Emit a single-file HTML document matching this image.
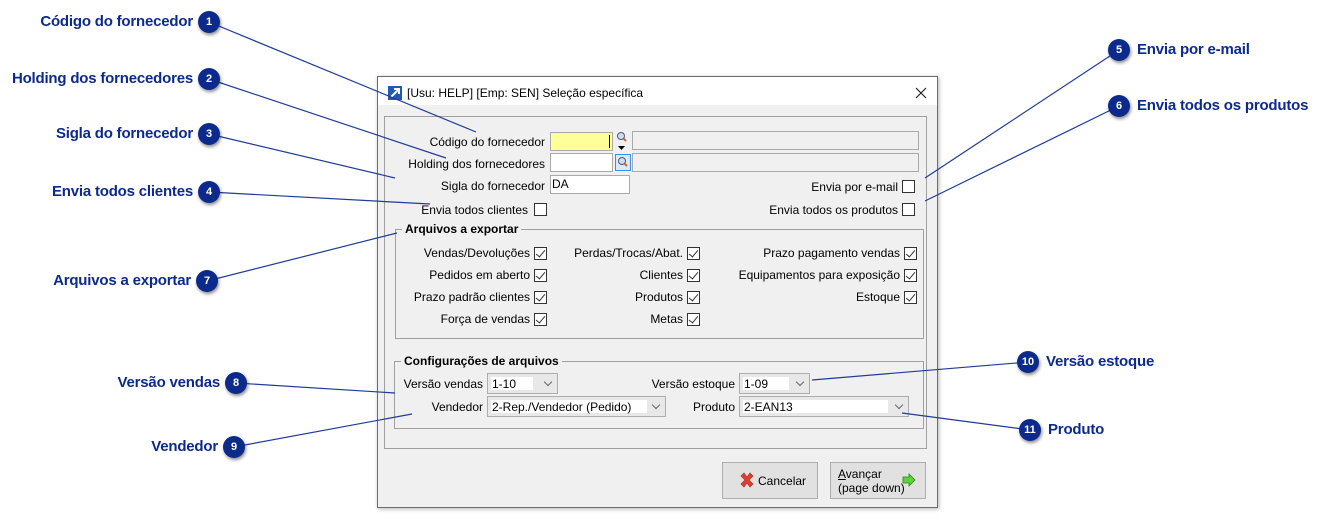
<!DOCTYPE html>
<html><head><meta charset="utf-8"><style>
*{margin:0;padding:0;box-sizing:border-box}
body{width:1322px;height:522px;background:#fff;position:relative;overflow:hidden;font-family:"Liberation Sans",sans-serif;font-size:12px;color:#000}
.a{position:absolute}
.c{position:absolute;color:#0c2a8c;font-weight:bold;font-size:15px;white-space:nowrap;line-height:18px;letter-spacing:-0.2px}
.b{position:absolute;width:22px;height:22px;border-radius:50%;background:#0c2a8c;color:#fff;font-weight:bold;font-size:11px;text-align:center;line-height:22px;box-shadow:1px 2px 3px rgba(0,0,0,.45);z-index:3}
.l{position:absolute;white-space:nowrap;line-height:14px;font-size:12px}
.cb{position:absolute;width:13px;height:13px;border:1px solid #333;background:#fff}
.ck{position:absolute;width:13px;height:13px;border:1px solid #333;background:#fff}
.ck:after{content:"";position:absolute;left:3px;top:0px;width:4px;height:8px;border:solid #333;border-width:0 1px 1px 0;transform:rotate(40deg)}
.in{position:absolute;background:#fff;border:1px solid #a9a9a9}
.cmb{position:absolute;background:#e8e8e8;border:1px solid #adadad}
.cmb .t{position:absolute;left:3px;top:3px;bottom:3px;background:#fff;padding-left:1px;line-height:15px}
.cmb .v{position:absolute;right:6px;top:5px;width:6px;height:6px;border:solid #666;border-width:0 1px 1px 0;transform:rotate(45deg)}
.grp{position:absolute;border:1px solid #a0a0a0}
.lg{position:absolute;background:#f0f0f0;font-weight:bold;padding:0 3px;line-height:14px}
.btn{position:absolute;background:#e1e1e1;border:1px solid #adadad}
</style></head><body>

<div class="c" style="right:1129px;top:13px">Código do fornecedor</div><div class="b" style="left:198px;top:11px">1</div>
<div class="c" style="right:1129px;top:70px">Holding dos fornecedores</div><div class="b" style="left:198px;top:68px">2</div>
<div class="c" style="right:1129px;top:125px">Sigla do fornecedor</div><div class="b" style="left:198px;top:123px">3</div>
<div class="c" style="right:1129px;top:183px">Envia todos clientes</div><div class="b" style="left:198px;top:181px">4</div>
<div class="c" style="right:1131px;top:272px">Arquivos a exportar</div><div class="b" style="left:196px;top:270px">7</div>
<div class="c" style="right:1102px;top:374px">Versão vendas</div><div class="b" style="left:225px;top:372px">8</div>
<div class="c" style="right:1104px;top:438px">Vendedor</div><div class="b" style="left:223px;top:436px">9</div>
<div class="b" style="left:1108px;top:39px">5</div><div class="c" style="left:1137px;top:41px">Envia por e-mail</div>
<div class="b" style="left:1108px;top:95px">6</div><div class="c" style="left:1137px;top:97px">Envia todos os produtos</div>
<div class="b" style="left:1017px;top:351px">10</div><div class="c" style="left:1046px;top:353px">Versão estoque</div>
<div class="b" style="left:1019px;top:419px">11</div><div class="c" style="left:1048px;top:421px">Produto</div>

<!-- dialog -->
<div class="a" style="left:377px;top:76px;width:561px;height:432px;background:#f0f0f0;border:1px solid #6d6d6d;box-shadow:1px 1px 4px rgba(0,0,0,.3)"></div>
<div class="a" style="left:378px;top:77px;width:559px;height:28px;background:#fff"></div>
<div class="a" style="left:388px;top:86px;width:14px;height:14px;background:#1f5bb5"><svg width="14" height="14"><path d="M3 11 L11 3 M6 3 H11 V8" stroke="#fff" stroke-width="2" fill="none"/></svg></div>
<div class="l" style="left:407px;top:86px">[Usu: HELP] [Emp: SEN] Seleção específica</div>
<svg class="a" style="left:915px;top:87px" width="12" height="12"><path d="M1 1L11 11M11 1L1 11" stroke="#222" stroke-width="1.2"/></svg>
<div class="a" style="left:384px;top:116px;width:543px;height:333px;border:1px solid #a0a0a0"></div>

<div class="l" style="right:777px;top:135px">Código do fornecedor</div>
<div class="in" style="left:550px;top:132px;width:63px;height:19px;background:#ffff99"></div>
<div class="a" style="left:609px;top:135px;width:1px;height:13px;background:#000"></div>
<svg class="a" style="left:616px;top:131px" width="12" height="22"><circle cx="5" cy="5" r="3.5" fill="#cde" stroke="#557"/><line x1="7.5" y1="7.5" x2="10" y2="10" stroke="#c63" stroke-width="2"/><path d="M2 15h7l-3.5 4z" fill="#000"/></svg>
<div class="in" style="left:632px;top:131px;width:287px;height:19px;background:#f0f0f0"></div>
<div class="l" style="right:777px;top:157px">Holding dos fornecedores</div>
<div class="in" style="left:550px;top:153px;width:63px;height:19px"></div>
<div class="a" style="left:615px;top:154px;width:16px;height:17px;border:1px solid #3a8ee6;background:#dbe9f8"></div>
<svg class="a" style="left:617px;top:156px" width="12" height="12"><circle cx="5" cy="5" r="3.5" fill="#cde" stroke="#557"/><line x1="7.5" y1="7.5" x2="10" y2="10" stroke="#c63" stroke-width="2"/></svg>
<div class="in" style="left:632px;top:153px;width:287px;height:19px;background:#f0f0f0"></div>
<div class="l" style="right:777px;top:179px">Sigla do fornecedor</div>
<div class="in" style="left:550px;top:175px;width:80px;height:19px;padding-left:1px;line-height:17px">DA</div>
<div class="l" style="right:424px;top:180px">Envia por e-mail</div><div class="cb" style="left:902px;top:180px"></div>
<div class="l" style="right:794px;top:203px">Envia todos clientes</div><div class="cb" style="left:534px;top:203px"></div>
<div class="l" style="right:424px;top:203px">Envia todos os produtos</div><div class="cb" style="left:902px;top:203px"></div>

<div class="grp" style="left:395px;top:229px;width:529px;height:110px"></div>
<div class="lg" style="left:402px;top:222px">Arquivos a exportar</div>
<div class="l" style="right:792px;top:246px">Vendas/Devoluções</div><div class="ck" style="left:534px;top:247px"></div>
<div class="l" style="right:792px;top:268px">Pedidos em aberto</div><div class="ck" style="left:534px;top:269px"></div>
<div class="l" style="right:792px;top:290px">Prazo padrão clientes</div><div class="ck" style="left:534px;top:291px"></div>
<div class="l" style="right:792px;top:312px">Força de vendas</div><div class="ck" style="left:534px;top:313px"></div>
<div class="l" style="right:639px;top:246px">Perdas/Trocas/Abat.</div><div class="ck" style="left:687px;top:247px"></div>
<div class="l" style="right:639px;top:268px">Clientes</div><div class="ck" style="left:687px;top:269px"></div>
<div class="l" style="right:639px;top:290px">Produtos</div><div class="ck" style="left:687px;top:291px"></div>
<div class="l" style="right:639px;top:312px">Metas</div><div class="ck" style="left:687px;top:313px"></div>
<div class="l" style="right:422px;top:246px">Prazo pagamento vendas</div><div class="ck" style="left:904px;top:247px"></div>
<div class="l" style="right:422px;top:268px">Equipamentos para exposição</div><div class="ck" style="left:904px;top:269px"></div>
<div class="l" style="right:422px;top:290px">Estoque</div><div class="ck" style="left:904px;top:291px"></div>

<div class="grp" style="left:394px;top:361px;width:530px;height:68px"></div>
<div class="lg" style="left:401px;top:354px">Configurações de arquivos</div>
<div class="l" style="right:839px;top:377px">Versão vendas</div>
<div class="cmb" style="left:487px;top:373px;width:71px;height:21px"><div class="t" style="right:24px">1-10</div><div class="v"></div></div>
<div class="l" style="right:839px;top:400px">Vendedor</div>
<div class="cmb" style="left:487px;top:396px;width:179px;height:21px"><div class="t" style="right:18px">2-Rep./Vendedor (Pedido)</div><div class="v"></div></div>
<div class="l" style="right:587px;top:377px">Versão estoque</div>
<div class="cmb" style="left:739px;top:373px;width:71px;height:21px"><div class="t" style="right:20px">1-09</div><div class="v"></div></div>
<div class="l" style="right:587px;top:400px">Produto</div>
<div class="cmb" style="left:739px;top:396px;width:170px;height:21px"><div class="t" style="right:20px">2-EAN13</div><div class="v"></div></div>

<div class="btn" style="left:722px;top:462px;width:96px;height:37px"></div>
<svg class="a" style="left:739px;top:472px" width="16" height="16"><path d="M2 4L5 1L8 5L11 1L14 4L10 8L14 12L11 15L8 11L5 15L2 12L6 8Z" fill="#e0412c" stroke="#a22" stroke-width=".6"/></svg>
<div class="l" style="left:758px;top:474px">Cancelar</div>
<div class="btn" style="left:830px;top:462px;width:96px;height:37px"></div>
<div class="l" style="left:838px;top:467px;line-height:14px"><u>A</u>vançar<br>(page down)</div>
<svg class="a" style="left:902px;top:473px" width="14" height="14"><path d="M1 4H7V1L13 7L7 13V10H1Z" fill="#5bd23a" stroke="#2a8a1a" stroke-width=".8"/></svg>

<svg class="a" style="left:0;top:0;z-index:2" width="1322" height="522">
<g stroke="#1f3c96" stroke-width="1.2" fill="none">
<line x1="209" y1="22" x2="476" y2="132"/>
<line x1="209" y1="79" x2="446" y2="158"/>
<line x1="209" y1="134" x2="395" y2="178"/>
<line x1="209" y1="192" x2="430" y2="204"/>
<line x1="1119" y1="50" x2="925" y2="178"/>
<line x1="1119" y1="106" x2="925" y2="201"/>
<line x1="207" y1="281" x2="397" y2="233"/>
<line x1="236" y1="383" x2="395" y2="393"/>
<line x1="234" y1="447" x2="412" y2="414"/>
<line x1="1028" y1="362" x2="812" y2="380"/>
<line x1="1030" y1="430" x2="902" y2="413"/>
</g></svg>
</body></html>
